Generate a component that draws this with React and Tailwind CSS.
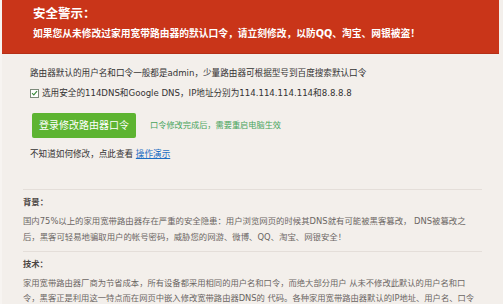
export default function App() {
  const font = { fontFamily: '"DejaVu Sans", "Noto Sans CJK SC", sans-serif' };

  return (
    <div className="w-full h-[304px] overflow-hidden bg-[#f7f4f1] pl-[2px]" style={font}>
      <div className="h-full bg-[#f3efeb]">
        {/* red warning banner */}
        <div className="mr-[4px] h-[54px] bg-[#c93519] border-b border-[#b52f16] px-[31px] pt-[6px] text-white">
          <div className="text-[12.5px] leading-[16px] font-bold">安全警示：</div>
          <div className="mt-[5px] text-[9.75px] leading-[14px] font-bold">
            如果您从未修改过家用宽带路由器的默认口令，请立刻修改，以防QQ、淘宝、网银被盗！
          </div>
        </div>

        <div className="px-[28px] pt-[12px] text-[#333] text-[8.6px]">
          <div className="leading-[14px]">
            路由器默认的用户名和口令一般都是admin，少量路由器可根据型号到百度搜索默认口令
          </div>
          <div className="mt-[6px] flex items-center gap-[3px] leading-[14px]">
            <span className="w-[9px] h-[9px] border border-[#7d8a7a] bg-white flex items-center justify-center">
              <svg viewBox="0 0 10 10" className="w-[8px] h-[8px]">
                <path d="M1.5 5.2 L4 7.6 L8.6 2.2" fill="none" stroke="#3a8a3a" strokeWidth="1.6" />
              </svg>
            </span>
            <span>选用安全的114DNS和Google DNS，IP地址分别为114.114.114.114和8.8.8.8</span>
          </div>
          <div className="mt-[13px] flex items-center">
            <div className="ml-[2px] w-[104px] h-[25px] rounded-[2px] bg-[#5db431] text-white text-[10px] flex items-center justify-center">
              登录修改路由器口令
            </div>
            <span className="ml-[14px] text-[8.2px] text-[#47a45c]">口令修改完成后，需要重启电脑生效</span>
          </div>
          <div className="mt-[9px] leading-[14px]">
            不知道如何修改，点此查看 <span className="text-[#1c6ec3] underline">操作演示</span>
          </div>
        </div>

        <div className="mx-[21px] mt-[28px] border-t border-[#e4ded9]" />
        <div className="px-[21px] text-[8.4px] text-[#6b6663]">
          <div className="mt-[5px] leading-[14px] font-bold text-[#4a4542]">背景：</div>
          <div className="mt-[5px] leading-[15.5px]">
            国内75%以上的家用宽带路由器存在严重的安全隐患：用户浏览网页的时候其DNS就有可能被黑客篡改， DNS被篡改之
            <br />
            后，黑客可轻易地骗取用户的帐号密码，威胁您的网游、微博、QQ、淘宝、网银安全！
          </div>
        </div>

        <div className="mx-[21px] mt-[6px] border-t border-[#e4ded9]" />
        <div className="px-[21px] text-[8.3px] text-[#6b6663]">
          <div className="mt-[5px] leading-[14px] font-bold text-[#4a4542]">技术：</div>
          <div className="mt-[4.5px] leading-[15px] whitespace-nowrap">
            家用宽带路由器厂商为节省成本，所有设备都采用相同的用户名和口令，而绝大部分用户 从未不修改此默认的用户名和口
            <br />
            令，黑客正是利用这一特点而在网页中嵌入修改宽带路由器DNS的 代码。各种家用宽带路由器默认的IP地址、用户名、口令
          </div>
        </div>
      </div>
    </div>
  );
}
